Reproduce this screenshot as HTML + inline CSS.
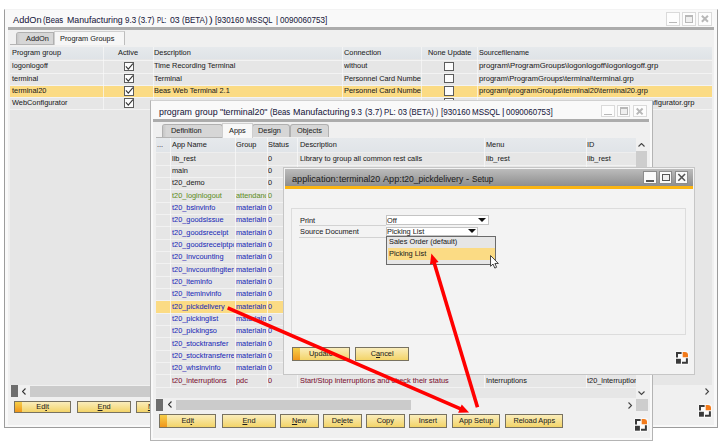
<!DOCTYPE html>
<html><head><meta charset="utf-8"><style>
html,body{margin:0;padding:0;width:722px;height:448px;overflow:hidden;background:#fff}
.a{position:absolute}
.t{position:absolute;white-space:nowrap;line-height:0;font-family:"Liberation Sans",sans-serif;transform-origin:0 0;-webkit-text-stroke:0.05px currentColor}
u{text-decoration:underline;text-underline-offset:1px}
</style></head><body>
<div class="a" style="left:4.20px;top:9.00px;width:713.90px;height:419.00px;background:#f9f9f9;border:1px solid #9c9c9c;border-top-color:#f3f3f3;box-sizing:border-box;"></div>
<div class="a" style="left:8.00px;top:29.80px;width:706.00px;height:395.00px;background:#f0f0f0;"></div>
<div class="t" style="left:13.00px;top:20.17px;font-size:9.6px;color:#202040;transform:scaleX(0.9582677625076275);">AddOn</div>
<div class="t" style="left:43.20px;top:20.17px;font-size:9.6px;color:#202040;transform:scaleX(0.8034855250935825);">(Beas</div>
<div class="t" style="left:67.00px;top:20.17px;font-size:9.6px;color:#202040;transform:scaleX(0.9163206892644159);">Manufacturing</div>
<div class="t" style="left:125.00px;top:20.17px;font-size:9.6px;color:#202040;transform:scaleX(0.830702928045294);">9.3</div>
<div class="t" style="left:138.10px;top:20.17px;font-size:9.6px;color:#202040;transform:scaleX(0.8345528280616333);">(3.7)</div>
<div class="t" style="left:157.00px;top:20.17px;font-size:9.6px;color:#202040;transform:scaleX(0.6480011820816846);">PL:</div>
<div class="t" style="left:170.10px;top:20.17px;font-size:9.6px;color:#202040;transform:scaleX(0.9094791046913483);">03</div>
<div class="t" style="left:181.60px;top:20.17px;font-size:9.6px;color:#202040;transform:scaleX(0.831712109985305);">(BETA)</div>
<div class="t" style="left:208.80px;top:20.17px;font-size:9.6px;color:#202040;transform:scaleX(1.1666666666666685);">)</div>
<div class="t" style="left:214.60px;top:20.17px;font-size:9.6px;color:#202040;transform:scaleX(0.8356777007261649);">[930160</div>
<div class="t" style="left:245.90px;top:20.17px;font-size:9.6px;color:#202040;transform:scaleX(0.7911968149441382);">MSSQL</div>
<div class="t" style="left:275.90px;top:20.17px;font-size:9.6px;color:#202040;transform:scaleX(0.8);">|</div>
<div class="t" style="left:279.60px;top:20.17px;font-size:9.6px;color:#202040;transform:scaleX(0.8436323702340981);">0090060753]</div>
<div class="a" style="left:666.00px;top:12.00px;width:13.80px;height:13.50px;background:#fdfdfd;border:1px solid #dadada;box-sizing:border-box;"></div>
<div class="a" style="left:668.90px;top:21.72px;width:8.00px;height:1.40px;background:#b8b8b8;"></div>
<div class="a" style="left:682.00px;top:12.00px;width:13.80px;height:13.50px;background:#fdfdfd;border:1px solid #dadada;box-sizing:border-box;"></div>
<div class="a" style="left:684.90px;top:14.70px;width:8.00px;height:8.10px;background:#efefef;border:1.5px solid #b8b8b8;border-top-width:2.1px;box-sizing:border-box;"></div>
<div class="a" style="left:698.00px;top:12.00px;width:13.80px;height:13.50px;background:#fdfdfd;border:1px solid #dadada;box-sizing:border-box;"></div>
<svg class="a" style="left:698.00px;top:12.00px" width="13.80" height="13.50"><path d="M3.86,3.71L9.94,9.79M9.94,3.71L3.86,9.79" stroke="#b8b8b8" stroke-width="2"/></svg>
<div class="a" style="left:8.00px;top:26.60px;width:706.00px;height:3.10px;background:#acacac;"></div>
<div class="a" style="left:16.20px;top:32.00px;width:38.30px;height:12.50px;background:#d6d6d6;border:1px solid #b0b0b0;border-bottom:none;border-top-left-radius:3px;box-sizing:border-box;"></div>
<div class="a" style="left:17.20px;top:33.00px;width:3.30px;height:11.50px;background:linear-gradient(90deg,#c6c6c6,#d4d4d4);border-top-left-radius:2px;"></div>
<div class="a" style="left:54.00px;top:31.20px;width:70.70px;height:13.80px;background:#f6f6f6;border:1px solid #cfcfcf;border-bottom:none;border-right:1.5px solid #bdbdbd;box-sizing:border-box;"></div>
<div class="a" style="left:9.80px;top:44.00px;width:44.70px;height:1.00px;background:#b4b4b4;"></div>
<div class="t" style="left:26.20px;top:38.60px;font-size:7.5px;color:#1e1e1e;transform:scaleX(0.98);">AddOn</div>
<div class="t" style="left:59.90px;top:38.60px;font-size:7.5px;color:#1e1e1e;transform:scaleX(0.98);">Program Groups</div>
<div class="a" style="left:10.40px;top:46.50px;width:701.60px;height:338.50px;background:#e6e6e6;"></div>
<div class="a" style="left:10.40px;top:46.80px;width:701.60px;height:12.70px;background:linear-gradient(#e6e9ec,#dfe3e7);"></div>
<div class="a" style="left:10.40px;top:60.40px;width:701.60px;height:1.00px;background:#f3f3f3;"></div>
<div class="a" style="left:10.40px;top:72.65px;width:701.60px;height:1.00px;background:#f3f3f3;"></div>
<div class="a" style="left:10.40px;top:84.90px;width:701.60px;height:1.00px;background:#f3f3f3;"></div>
<div class="a" style="left:10.40px;top:97.15px;width:701.60px;height:1.00px;background:#f3f3f3;"></div>
<div class="a" style="left:10.40px;top:109.40px;width:701.60px;height:1.00px;background:#f3f3f3;"></div>
<div class="a" style="left:10.40px;top:85.90px;width:701.60px;height:11.25px;background:#fbdb84;"></div>
<div class="a" style="left:103.20px;top:46.50px;width:1.00px;height:63.50px;background:rgba(248,248,248,0.7);"></div>
<div class="a" style="left:152.50px;top:46.50px;width:1.00px;height:63.50px;background:rgba(248,248,248,0.7);"></div>
<div class="a" style="left:342.00px;top:46.50px;width:1.00px;height:63.50px;background:rgba(248,248,248,0.7);"></div>
<div class="a" style="left:420.70px;top:46.50px;width:1.00px;height:63.50px;background:rgba(248,248,248,0.7);"></div>
<div class="a" style="left:476.90px;top:46.50px;width:1.00px;height:63.50px;background:rgba(248,248,248,0.7);"></div>
<div class="t" style="left:12.20px;top:53.00px;font-size:7.5px;color:#1e1e1e;transform:scaleX(0.98);">Program group</div>
<div class="t" style="left:118.00px;top:53.00px;font-size:7.5px;color:#1e1e1e;transform:scaleX(0.98);">Active</div>
<div class="t" style="left:153.90px;top:53.00px;font-size:7.5px;color:#1e1e1e;transform:scaleX(0.98);">Description</div>
<div class="t" style="left:344.00px;top:53.00px;font-size:7.5px;color:#1e1e1e;transform:scaleX(0.98);">Connection</div>
<div class="t" style="left:428.00px;top:53.00px;font-size:7.5px;color:#1e1e1e;transform:scaleX(0.98);">None Update</div>
<div class="t" style="left:478.50px;top:53.00px;font-size:7.5px;color:#1e1e1e;transform:scaleX(0.9594752869524479);">Sourcefilename</div>
<div class="t" style="left:12.20px;top:66.40px;font-size:7.5px;color:#1e1e1e;transform:scaleX(0.98);">logonlogoff</div>
<div class="t" style="left:153.90px;top:66.40px;font-size:7.5px;color:#1e1e1e;transform:scaleX(0.98);">Time Recording Terminal</div>
<div class="a" style="left:344.00px;top:57.00px;width:76.50px;height:16px;overflow:hidden"><div class="t" style="left:0;top:9.40px;font-size:7.5px;color:#1e1e1e;transform:scaleX(0.98);">without</div></div>
<div class="t" style="left:478.50px;top:66.40px;font-size:7.5px;color:#1e1e1e;transform:scaleX(1.0323750852690285);">program\ProgramGroups\logonlogoff\logonlogoff.grp</div>
<div class="a" style="left:123.50px;top:61.50px;width:10.00px;height:9.50px;background:#fcfcfc;border:1px solid #5c5c5c;box-sizing:border-box;"></div>
<svg class="a" style="left:123.5px;top:61.5px" width="10" height="10"><path d="M1.9,4.4L4.3,7.2L8.9,1.6" fill="none" stroke="#333" stroke-width="1.05"/></svg>
<div class="a" style="left:444.20px;top:61.50px;width:10.00px;height:9.50px;background:#fcfcfc;border:1px solid #5c5c5c;box-sizing:border-box;"></div>
<div class="t" style="left:12.20px;top:78.65px;font-size:7.5px;color:#1e1e1e;transform:scaleX(0.98);">terminal</div>
<div class="t" style="left:153.90px;top:78.65px;font-size:7.5px;color:#1e1e1e;transform:scaleX(0.98);">Terminal</div>
<div class="a" style="left:344.00px;top:69.25px;width:76.50px;height:16px;overflow:hidden"><div class="t" style="left:0;top:9.40px;font-size:7.5px;color:#1e1e1e;transform:scaleX(0.98);">Personnel Card Number</div></div>
<div class="t" style="left:478.50px;top:78.65px;font-size:7.5px;color:#1e1e1e;transform:scaleX(1.0051693294284787);">program\ProgramGroups\terminal\terminal.grp</div>
<div class="a" style="left:123.50px;top:73.75px;width:10.00px;height:9.50px;background:#fcfcfc;border:1px solid #5c5c5c;box-sizing:border-box;"></div>
<svg class="a" style="left:123.5px;top:73.75px" width="10" height="10"><path d="M1.9,4.4L4.3,7.2L8.9,1.6" fill="none" stroke="#333" stroke-width="1.05"/></svg>
<div class="a" style="left:444.20px;top:73.75px;width:10.00px;height:9.50px;background:#fcfcfc;border:1px solid #5c5c5c;box-sizing:border-box;"></div>
<div class="t" style="left:12.20px;top:90.90px;font-size:7.5px;color:#1e1e1e;transform:scaleX(0.98);">terminal20</div>
<div class="t" style="left:153.90px;top:90.90px;font-size:7.5px;color:#1e1e1e;transform:scaleX(0.98);">Beas Web Terminal 2.1</div>
<div class="a" style="left:344.00px;top:81.50px;width:76.50px;height:16px;overflow:hidden"><div class="t" style="left:0;top:9.40px;font-size:7.5px;color:#1e1e1e;transform:scaleX(0.98);">Personnel Card Number</div></div>
<div class="t" style="left:478.50px;top:90.90px;font-size:7.5px;color:#1e1e1e;transform:scaleX(0.994941576008749);">program\programGroups\terminal20\terminal20.grp</div>
<div class="a" style="left:123.50px;top:86.00px;width:10.00px;height:9.50px;background:#fcfcfc;border:1px solid #5c5c5c;box-sizing:border-box;"></div>
<svg class="a" style="left:123.5px;top:86.0px" width="10" height="10"><path d="M1.9,4.4L4.3,7.2L8.9,1.6" fill="none" stroke="#333" stroke-width="1.05"/></svg>
<div class="a" style="left:444.20px;top:86.00px;width:10.00px;height:9.50px;background:#fcfcfc;border:1px solid #5c5c5c;box-sizing:border-box;"></div>
<div class="t" style="left:12.20px;top:103.15px;font-size:7.5px;color:#1e1e1e;transform:scaleX(0.98);">WebConfigurator</div>
<div class="a" style="left:653px;top:93.25px;width:59px;height:16px;overflow:hidden">
<div class="t" style="left:-174.50px;top:10.10px;font-size:7.5px;color:#1e1e1e;transform:scaleX(1.0105240009621);">program\ProgramGroups\WebConfigurator\WebConfigurator.grp</div>
</div>
<div class="a" style="left:123.50px;top:98.25px;width:10.00px;height:9.50px;background:#fcfcfc;border:1px solid #5c5c5c;box-sizing:border-box;"></div>
<svg class="a" style="left:123.5px;top:98.25px" width="10" height="10"><path d="M1.9,4.4L4.3,7.2L8.9,1.6" fill="none" stroke="#333" stroke-width="1.05"/></svg>
<div class="a" style="left:444.20px;top:98.25px;width:10.00px;height:9.50px;background:#fcfcfc;border:1px solid #5c5c5c;box-sizing:border-box;"></div>
<div class="a" style="left:10.40px;top:385.00px;width:702.60px;height:12.00px;background:#f0f0f0;"></div>
<div class="a" style="left:10.90px;top:385.00px;width:6.80px;height:11.60px;background:#6e6e6e;"></div>
<svg class="a" style="left:22.00px;top:387.50px" width="5" height="8"><path d="M3,0L0,3L3,6" transform="translate(0.5,0.5)" fill="none" stroke="#333" stroke-width="1.1"/></svg>
<div class="a" style="left:30.00px;top:385.50px;width:610.00px;height:11.00px;background:#cbcbcb;"></div>
<svg class="a" style="left:705.00px;top:387.50px" width="5" height="8"><path d="M0,0L3,3L0,6" transform="translate(0.5,0.5)" fill="none" stroke="#444" stroke-width="1.1"/></svg>
<div class="a" style="left:13.60px;top:400.50px;width:57.30px;height:12.90px;background:linear-gradient(#faedbb,#f3d468);border:1px solid #787260;box-sizing:border-box;"></div>
<div class="a" style="left:14.60px;top:401.50px;width:7.00px;height:10.90px;background:linear-gradient(#f6cf4a,#f0961a);"></div>
<div class="t" style="left:13.60px;width:57.30px;text-align:center;transform-origin:50% 0;top:406.65px;font-size:7.5px;color:#1e1e1e;transform:scaleX(0.98)">Ed<u>i</u>t</div>
<div class="a" style="left:76.60px;top:400.50px;width:54.30px;height:12.90px;background:linear-gradient(#faedbb,#f3d468);border:1px solid #787260;box-sizing:border-box;"></div>
<div class="t" style="left:76.60px;width:54.30px;text-align:center;transform-origin:50% 0;top:406.65px;font-size:7.5px;color:#1e1e1e;transform:scaleX(0.98)"><u>E</u>nd</div>
<div class="a" style="left:135.70px;top:400.50px;width:38.50px;height:12.90px;background:linear-gradient(#faedbb,#f3d468);border:1px solid #787260;box-sizing:border-box;"></div>
<div class="t" style="left:135.70px;width:38.50px;text-align:center;transform-origin:50% 0;top:406.65px;font-size:7.5px;color:#1e1e1e;transform:scaleX(0.98)"><u>N</u>ew</div>
<svg class="a" style="left:698.00px;top:404.00px" width="14" height="14" viewBox="-1 -1 14 14"><rect x="-0.8" y="-0.8" width="13.6" height="13.6" rx="1.5" fill="#fbfbfb"/><path d="M0,5.6V0H5.6V2H2V5.6Z" fill="#3a3a3a"/><path d="M6.7,0H9A3,3 0 0 1 12,3V5.2H6.7Z" fill="#f27a1a"/><rect x="0" y="6.8" width="4.9" height="4.9" fill="#3a3a3a"/><path d="M11.9,6.2V11.7H6V9.7H9.9V6.2Z" fill="#3a3a3a"/></svg>
<div class="a" style="left:149.50px;top:99.60px;width:503.70px;height:341.80px;background:#f9f9f9;border:1.6px solid #b4b4b4;border-top-color:#d0d0d0;box-sizing:border-box;"></div>
<div class="a" style="left:153.00px;top:122.00px;width:496.70px;height:316.30px;background:#f0f0f0;"></div>
<div class="t" style="left:158.60px;top:112.24px;font-size:9.4px;color:#202040;transform:scaleX(0.9430304379277725);">program</div>
<div class="t" style="left:194.50px;top:112.24px;font-size:9.4px;color:#202040;transform:scaleX(0.9426128497861787);">group</div>
<div class="t" style="left:220.00px;top:112.24px;font-size:9.4px;color:#202040;transform:scaleX(0.9421288529738903);">"terminal20"</div>
<div class="t" style="left:269.50px;top:112.24px;font-size:9.4px;color:#202040;transform:scaleX(0.826517705539286);">(Beas</div>
<div class="t" style="left:292.80px;top:112.24px;font-size:9.4px;color:#202040;transform:scaleX(0.9510996087003591);">Manufacturing</div>
<div class="t" style="left:351.40px;top:112.24px;font-size:9.4px;color:#202040;transform:scaleX(0.8425254737644025);">9.3</div>
<div class="t" style="left:364.50px;top:112.24px;font-size:9.4px;color:#202040;transform:scaleX(0.8927415423147149);">(3.7)</div>
<div class="t" style="left:383.60px;top:112.24px;font-size:9.4px;color:#202040;transform:scaleX(0.8316638189292221);">PL:</div>
<div class="t" style="left:397.60px;top:112.24px;font-size:9.4px;color:#202040;transform:scaleX(0.8713591681854862);">03</div>
<div class="t" style="left:408.80px;top:112.24px;font-size:9.4px;color:#202040;transform:scaleX(0.8291316092203227);">(BETA)</div>
<div class="t" style="left:436.20px;top:112.24px;font-size:9.4px;color:#202040;transform:scaleX(0.6666666666666591);">)</div>
<div class="t" style="left:441.00px;top:112.24px;font-size:9.4px;color:#202040;transform:scaleX(0.8671297034727751);">[930160</div>
<div class="t" style="left:472.00px;top:112.24px;font-size:9.4px;color:#202040;transform:scaleX(0.8525586575447591);">MSSQL</div>
<div class="t" style="left:502.00px;top:112.24px;font-size:9.4px;color:#202040;transform:scaleX(0.9999999999999887);">|</div>
<div class="t" style="left:506.30px;top:112.24px;font-size:9.4px;color:#202040;transform:scaleX(0.8533544978794121);">0090060753]</div>
<div class="a" style="left:601.40px;top:104.60px;width:13.30px;height:12.90px;background:#fdfdfd;border:1px solid #dadada;box-sizing:border-box;"></div>
<div class="a" style="left:604.19px;top:113.89px;width:7.71px;height:1.40px;background:#b8b8b8;"></div>
<div class="a" style="left:617.20px;top:104.60px;width:13.30px;height:12.90px;background:#fdfdfd;border:1px solid #dadada;box-sizing:border-box;"></div>
<div class="a" style="left:619.99px;top:107.18px;width:7.71px;height:7.74px;background:#efefef;border:1.5px solid #b8b8b8;border-top-width:2.1px;box-sizing:border-box;"></div>
<div class="a" style="left:633.40px;top:104.60px;width:13.30px;height:12.90px;background:#fdfdfd;border:1px solid #dadada;box-sizing:border-box;"></div>
<svg class="a" style="left:633.40px;top:104.60px" width="13.30" height="12.90"><path d="M3.72,3.52L9.58,9.38M9.58,3.52L3.72,9.38" stroke="#b8b8b8" stroke-width="2"/></svg>
<div class="a" style="left:153.40px;top:119.40px;width:495.60px;height:2.60px;background:#acacac;"></div>
<div class="a" style="left:156.00px;top:136.80px;width:66.40px;height:1.00px;background:#b4b4b4;"></div>
<div class="a" style="left:161.80px;top:124.20px;width:61.00px;height:13.30px;background:#d6d6d6;border:1px solid #b0b0b0;border-bottom:none;border-radius:3px 3px 0 0;box-sizing:border-box;"></div>
<div class="t" style="left:171.20px;top:130.80px;font-size:7.5px;color:#1e1e1e;transform:scaleX(0.98);">Definition</div>
<div class="a" style="left:162.80px;top:125.20px;width:3.20px;height:12.30px;background:linear-gradient(90deg,#c6c6c6,#d4d4d4);border-top-left-radius:2px;"></div>
<div class="a" style="left:252.20px;top:124.20px;width:37.70px;height:13.30px;background:#d6d6d6;border:1px solid #b0b0b0;border-bottom:none;border-radius:3px 3px 0 0;box-sizing:border-box;"></div>
<div class="t" style="left:258.00px;top:130.80px;font-size:7.5px;color:#1e1e1e;transform:scaleX(0.98);">Design</div>
<div class="a" style="left:289.50px;top:124.20px;width:39.50px;height:13.30px;background:#d6d6d6;border:1px solid #b0b0b0;border-bottom:none;border-radius:3px 3px 0 0;box-sizing:border-box;"></div>
<div class="t" style="left:297.00px;top:130.80px;font-size:7.5px;color:#1e1e1e;transform:scaleX(0.98);">Objects</div>
<div class="a" style="left:222.40px;top:122.90px;width:30.20px;height:15.10px;background:#f8f8f8;border:1px solid #cfcfcf;border-bottom:none;box-sizing:border-box;"></div>
<div class="t" style="left:229.30px;top:130.80px;font-size:7.5px;color:#1e1e1e;transform:scaleX(0.98);">Apps</div>
<div class="a" style="left:156.00px;top:138.00px;width:479.50px;height:260.20px;background:#e6e6e6;"></div>
<div class="a" style="left:156.00px;top:138.00px;width:479.50px;height:13.50px;background:linear-gradient(#e6e9ec,#e0e4e8);"></div>
<div class="a" style="left:156.00px;top:151.50px;width:479.50px;height:1.80px;background:#eeeeee;"></div>
<div class="t" style="left:157.30px;top:145.10px;font-size:7.5px;color:#1e1e1e;transform:scaleX(0.98);">...</div>
<div class="t" style="left:172.40px;top:145.10px;font-size:7.5px;color:#1e1e1e;transform:scaleX(0.98);">App Name</div>
<div class="t" style="left:235.80px;top:145.10px;font-size:7.5px;color:#1e1e1e;transform:scaleX(0.98);">Group</div>
<div class="t" style="left:267.60px;top:145.10px;font-size:7.5px;color:#1e1e1e;transform:scaleX(0.98);">Status</div>
<div class="t" style="left:299.60px;top:145.10px;font-size:7.5px;color:#1e1e1e;transform:scaleX(0.98);">Description</div>
<div class="t" style="left:485.50px;top:145.10px;font-size:7.5px;color:#1e1e1e;transform:scaleX(0.98);">Menu</div>
<div class="t" style="left:587.00px;top:145.10px;font-size:7.5px;color:#1e1e1e;transform:scaleX(0.98);">ID</div>
<div class="a" style="left:156.00px;top:164.63px;width:479.50px;height:1.00px;background:#f2f2f2;"></div>
<div class="a" style="left:171.70px;top:149.40px;width:62.10px;height:16px;overflow:hidden"><div class="t" style="left:0;top:9.40px;font-size:7.5px;color:#1e1e1e;transform:scaleX(0.98);">lib_rest</div></div>
<div class="t" style="left:267.90px;top:158.80px;font-size:7.5px;color:#1e1e1e;transform:scaleX(0.98);">0</div>
<div class="t" style="left:299.60px;top:158.80px;font-size:7.5px;color:#1e1e1e;transform:scaleX(0.98);">Library to group all common rest calls</div>
<div class="t" style="left:485.50px;top:158.80px;font-size:7.5px;color:#1e1e1e;transform:scaleX(0.98);">lib_rest</div>
<div class="t" style="left:587.00px;top:158.80px;font-size:7.5px;color:#1e1e1e;transform:scaleX(0.98);">lib_rest</div>
<div class="a" style="left:156.00px;top:176.96px;width:479.50px;height:1.00px;background:#f2f2f2;"></div>
<div class="a" style="left:171.70px;top:161.73px;width:62.10px;height:16px;overflow:hidden"><div class="t" style="left:0;top:9.40px;font-size:7.5px;color:#1e1e1e;transform:scaleX(0.98);">main</div></div>
<div class="t" style="left:267.90px;top:171.13px;font-size:7.5px;color:#1e1e1e;transform:scaleX(0.98);">0</div>
<div class="a" style="left:156.00px;top:189.29px;width:479.50px;height:1.00px;background:#f2f2f2;"></div>
<div class="a" style="left:171.70px;top:174.06px;width:62.10px;height:16px;overflow:hidden"><div class="t" style="left:0;top:9.40px;font-size:7.5px;color:#1e1e1e;transform:scaleX(0.98);">t20_demo</div></div>
<div class="t" style="left:267.90px;top:183.46px;font-size:7.5px;color:#1e1e1e;transform:scaleX(0.98);">0</div>
<div class="a" style="left:156.00px;top:201.62px;width:479.50px;height:1.00px;background:#f2f2f2;"></div>
<div class="a" style="left:171.70px;top:186.39px;width:62.10px;height:16px;overflow:hidden"><div class="t" style="left:0;top:9.40px;font-size:7.5px;color:#5f8f1f;transform:scaleX(0.98);">t20_loginlogout</div></div>
<div class="a" style="left:235.80px;top:186.39px;width:30.10px;height:16px;overflow:hidden"><div class="t" style="left:0;top:9.40px;font-size:7.5px;color:#5f8f1f;transform:scaleX(0.98);">attendance</div></div>
<div class="t" style="left:267.90px;top:195.79px;font-size:7.5px;color:#5f8f1f;transform:scaleX(0.98);">0</div>
<div class="a" style="left:156.00px;top:213.95px;width:479.50px;height:1.00px;background:#f2f2f2;"></div>
<div class="a" style="left:171.70px;top:198.72px;width:62.10px;height:16px;overflow:hidden"><div class="t" style="left:0;top:9.40px;font-size:7.5px;color:#1c2cb8;transform:scaleX(0.98);">t20_bsinvinfo</div></div>
<div class="a" style="left:235.80px;top:198.72px;width:30.10px;height:16px;overflow:hidden"><div class="t" style="left:0;top:9.40px;font-size:7.5px;color:#1c2cb8;transform:scaleX(0.98);">materialmanagement</div></div>
<div class="t" style="left:267.90px;top:208.12px;font-size:7.5px;color:#1c2cb8;transform:scaleX(0.98);">0</div>
<div class="a" style="left:156.00px;top:226.28px;width:479.50px;height:1.00px;background:#f2f2f2;"></div>
<div class="a" style="left:171.70px;top:211.05px;width:62.10px;height:16px;overflow:hidden"><div class="t" style="left:0;top:9.40px;font-size:7.5px;color:#1c2cb8;transform:scaleX(0.98);">t20_goodsissue</div></div>
<div class="a" style="left:235.80px;top:211.05px;width:30.10px;height:16px;overflow:hidden"><div class="t" style="left:0;top:9.40px;font-size:7.5px;color:#1c2cb8;transform:scaleX(0.98);">materialmanagement</div></div>
<div class="t" style="left:267.90px;top:220.45px;font-size:7.5px;color:#1c2cb8;transform:scaleX(0.98);">0</div>
<div class="a" style="left:156.00px;top:238.61px;width:479.50px;height:1.00px;background:#f2f2f2;"></div>
<div class="a" style="left:171.70px;top:223.38px;width:62.10px;height:16px;overflow:hidden"><div class="t" style="left:0;top:9.40px;font-size:7.5px;color:#1c2cb8;transform:scaleX(0.98);">t20_goodsreceipt</div></div>
<div class="a" style="left:235.80px;top:223.38px;width:30.10px;height:16px;overflow:hidden"><div class="t" style="left:0;top:9.40px;font-size:7.5px;color:#1c2cb8;transform:scaleX(0.98);">materialmanagement</div></div>
<div class="t" style="left:267.90px;top:232.78px;font-size:7.5px;color:#1c2cb8;transform:scaleX(0.98);">0</div>
<div class="a" style="left:156.00px;top:250.94px;width:479.50px;height:1.00px;background:#f2f2f2;"></div>
<div class="a" style="left:171.70px;top:235.71px;width:62.10px;height:16px;overflow:hidden"><div class="t" style="left:0;top:9.40px;font-size:7.5px;color:#1c2cb8;transform:scaleX(0.98);">t20_goodsreceiptpo</div></div>
<div class="a" style="left:235.80px;top:235.71px;width:30.10px;height:16px;overflow:hidden"><div class="t" style="left:0;top:9.40px;font-size:7.5px;color:#1c2cb8;transform:scaleX(0.98);">materialmanagement</div></div>
<div class="t" style="left:267.90px;top:245.11px;font-size:7.5px;color:#1c2cb8;transform:scaleX(0.98);">0</div>
<div class="a" style="left:156.00px;top:263.27px;width:479.50px;height:1.00px;background:#f2f2f2;"></div>
<div class="a" style="left:171.70px;top:248.04px;width:62.10px;height:16px;overflow:hidden"><div class="t" style="left:0;top:9.40px;font-size:7.5px;color:#1c2cb8;transform:scaleX(0.98);">t20_invcounting</div></div>
<div class="a" style="left:235.80px;top:248.04px;width:30.10px;height:16px;overflow:hidden"><div class="t" style="left:0;top:9.40px;font-size:7.5px;color:#1c2cb8;transform:scaleX(0.98);">materialmanagement</div></div>
<div class="t" style="left:267.90px;top:257.44px;font-size:7.5px;color:#1c2cb8;transform:scaleX(0.98);">0</div>
<div class="a" style="left:156.00px;top:275.60px;width:479.50px;height:1.00px;background:#f2f2f2;"></div>
<div class="a" style="left:171.70px;top:260.37px;width:62.10px;height:16px;overflow:hidden"><div class="t" style="left:0;top:9.40px;font-size:7.5px;color:#1c2cb8;transform:scaleX(0.98);">t20_invcountingitem</div></div>
<div class="a" style="left:235.80px;top:260.37px;width:30.10px;height:16px;overflow:hidden"><div class="t" style="left:0;top:9.40px;font-size:7.5px;color:#1c2cb8;transform:scaleX(0.98);">materialmanagement</div></div>
<div class="t" style="left:267.90px;top:269.77px;font-size:7.5px;color:#1c2cb8;transform:scaleX(0.98);">0</div>
<div class="a" style="left:156.00px;top:287.93px;width:479.50px;height:1.00px;background:#f2f2f2;"></div>
<div class="a" style="left:171.70px;top:272.70px;width:62.10px;height:16px;overflow:hidden"><div class="t" style="left:0;top:9.40px;font-size:7.5px;color:#1c2cb8;transform:scaleX(0.98);">t20_iteminfo</div></div>
<div class="a" style="left:235.80px;top:272.70px;width:30.10px;height:16px;overflow:hidden"><div class="t" style="left:0;top:9.40px;font-size:7.5px;color:#1c2cb8;transform:scaleX(0.98);">materialmanagement</div></div>
<div class="t" style="left:267.90px;top:282.10px;font-size:7.5px;color:#1c2cb8;transform:scaleX(0.98);">0</div>
<div class="a" style="left:156.00px;top:300.26px;width:479.50px;height:1.00px;background:#f2f2f2;"></div>
<div class="a" style="left:171.70px;top:285.03px;width:62.10px;height:16px;overflow:hidden"><div class="t" style="left:0;top:9.40px;font-size:7.5px;color:#1c2cb8;transform:scaleX(0.98);">t20_iteminvinfo</div></div>
<div class="a" style="left:235.80px;top:285.03px;width:30.10px;height:16px;overflow:hidden"><div class="t" style="left:0;top:9.40px;font-size:7.5px;color:#1c2cb8;transform:scaleX(0.98);">materialmanagement</div></div>
<div class="t" style="left:267.90px;top:294.43px;font-size:7.5px;color:#1c2cb8;transform:scaleX(0.98);">0</div>
<div class="a" style="left:156.00px;top:312.59px;width:479.50px;height:1.00px;background:#f2f2f2;"></div>
<div class="a" style="left:156.00px;top:301.26px;width:479.50px;height:11.33px;background:#fbdb84;"></div>
<div class="a" style="left:171.70px;top:297.36px;width:62.10px;height:16px;overflow:hidden"><div class="t" style="left:0;top:9.40px;font-size:7.5px;color:#1c2cb8;transform:scaleX(0.98);">t20_pickdelivery</div></div>
<div class="a" style="left:235.80px;top:297.36px;width:30.10px;height:16px;overflow:hidden"><div class="t" style="left:0;top:9.40px;font-size:7.5px;color:#1c2cb8;transform:scaleX(0.98);">materialmanagement</div></div>
<div class="t" style="left:267.90px;top:306.76px;font-size:7.5px;color:#1c2cb8;transform:scaleX(0.98);">0</div>
<div class="a" style="left:156.00px;top:324.92px;width:479.50px;height:1.00px;background:#f2f2f2;"></div>
<div class="a" style="left:171.70px;top:309.69px;width:62.10px;height:16px;overflow:hidden"><div class="t" style="left:0;top:9.40px;font-size:7.5px;color:#1c2cb8;transform:scaleX(0.98);">t20_pickinglist</div></div>
<div class="a" style="left:235.80px;top:309.69px;width:30.10px;height:16px;overflow:hidden"><div class="t" style="left:0;top:9.40px;font-size:7.5px;color:#1c2cb8;transform:scaleX(0.98);">materialmanagement</div></div>
<div class="t" style="left:267.90px;top:319.09px;font-size:7.5px;color:#1c2cb8;transform:scaleX(0.98);">0</div>
<div class="a" style="left:156.00px;top:337.25px;width:479.50px;height:1.00px;background:#f2f2f2;"></div>
<div class="a" style="left:171.70px;top:322.02px;width:62.10px;height:16px;overflow:hidden"><div class="t" style="left:0;top:9.40px;font-size:7.5px;color:#1c2cb8;transform:scaleX(0.98);">t20_pickingso</div></div>
<div class="a" style="left:235.80px;top:322.02px;width:30.10px;height:16px;overflow:hidden"><div class="t" style="left:0;top:9.40px;font-size:7.5px;color:#1c2cb8;transform:scaleX(0.98);">materialmanagement</div></div>
<div class="t" style="left:267.90px;top:331.42px;font-size:7.5px;color:#1c2cb8;transform:scaleX(0.98);">0</div>
<div class="a" style="left:156.00px;top:349.58px;width:479.50px;height:1.00px;background:#f2f2f2;"></div>
<div class="a" style="left:171.70px;top:334.35px;width:62.10px;height:16px;overflow:hidden"><div class="t" style="left:0;top:9.40px;font-size:7.5px;color:#1c2cb8;transform:scaleX(0.98);">t20_stocktransfer</div></div>
<div class="a" style="left:235.80px;top:334.35px;width:30.10px;height:16px;overflow:hidden"><div class="t" style="left:0;top:9.40px;font-size:7.5px;color:#1c2cb8;transform:scaleX(0.98);">materialmanagement</div></div>
<div class="t" style="left:267.90px;top:343.75px;font-size:7.5px;color:#1c2cb8;transform:scaleX(0.98);">0</div>
<div class="a" style="left:156.00px;top:361.91px;width:479.50px;height:1.00px;background:#f2f2f2;"></div>
<div class="a" style="left:171.70px;top:346.68px;width:62.10px;height:16px;overflow:hidden"><div class="t" style="left:0;top:9.40px;font-size:7.5px;color:#1c2cb8;transform:scaleX(0.98);">t20_stocktransferrequest</div></div>
<div class="a" style="left:235.80px;top:346.68px;width:30.10px;height:16px;overflow:hidden"><div class="t" style="left:0;top:9.40px;font-size:7.5px;color:#1c2cb8;transform:scaleX(0.98);">materialmanagement</div></div>
<div class="t" style="left:267.90px;top:356.08px;font-size:7.5px;color:#1c2cb8;transform:scaleX(0.98);">0</div>
<div class="a" style="left:156.00px;top:374.24px;width:479.50px;height:1.00px;background:#f2f2f2;"></div>
<div class="a" style="left:171.70px;top:359.01px;width:62.10px;height:16px;overflow:hidden"><div class="t" style="left:0;top:9.40px;font-size:7.5px;color:#1c2cb8;transform:scaleX(0.98);">t20_whsinvinfo</div></div>
<div class="a" style="left:235.80px;top:359.01px;width:30.10px;height:16px;overflow:hidden"><div class="t" style="left:0;top:9.40px;font-size:7.5px;color:#1c2cb8;transform:scaleX(0.98);">materialmanagement</div></div>
<div class="t" style="left:267.90px;top:368.41px;font-size:7.5px;color:#1c2cb8;transform:scaleX(0.98);">0</div>
<div class="a" style="left:156.00px;top:386.57px;width:479.50px;height:1.00px;background:#f2f2f2;"></div>
<div class="a" style="left:171.70px;top:371.34px;width:62.10px;height:16px;overflow:hidden"><div class="t" style="left:0;top:9.40px;font-size:7.5px;color:#7c1232;transform:scaleX(0.98);">t20_interruptions</div></div>
<div class="a" style="left:235.80px;top:371.34px;width:30.10px;height:16px;overflow:hidden"><div class="t" style="left:0;top:9.40px;font-size:7.5px;color:#7c1232;transform:scaleX(0.98);">pdc</div></div>
<div class="t" style="left:267.90px;top:380.74px;font-size:7.5px;color:#7c1232;transform:scaleX(0.98);">0</div>
<div class="t" style="left:299.60px;top:380.74px;font-size:7.5px;color:#7c1232;transform:scaleX(0.98);">Start/Stop interruptions and check their status</div>
<div class="t" style="left:485.50px;top:380.74px;font-size:7.5px;color:#1e1e1e;transform:scaleX(0.98);">Interruptions</div>
<div class="a" style="left:587.00px;top:371.34px;width:49.00px;height:16px;overflow:hidden"><div class="t" style="left:0;top:9.40px;font-size:7.5px;color:#1e1e1e;transform:scaleX(0.98);">t20_interruptions</div></div>
<div class="a" style="left:170.40px;top:138.00px;width:1.00px;height:249.50px;background:rgba(248,248,248,0.75);"></div>
<div class="a" style="left:234.50px;top:138.00px;width:1.00px;height:249.50px;background:rgba(248,248,248,0.75);"></div>
<div class="a" style="left:266.50px;top:138.00px;width:1.00px;height:249.50px;background:rgba(248,248,248,0.75);"></div>
<div class="a" style="left:297.40px;top:138.00px;width:1.00px;height:249.50px;background:rgba(248,248,248,0.75);"></div>
<div class="a" style="left:483.70px;top:138.00px;width:1.00px;height:249.50px;background:rgba(248,248,248,0.75);"></div>
<div class="a" style="left:585.50px;top:138.00px;width:1.00px;height:249.50px;background:rgba(248,248,248,0.75);"></div>
<div class="a" style="left:635.50px;top:138.00px;width:12.50px;height:260.20px;background:#f0f0f0;"></div>
<svg class="a" style="left:638.30px;top:142.50px" width="8" height="5"><path d="M0,3L3,0L6,3" transform="translate(0.5,0.5)" fill="none" stroke="#444" stroke-width="1.1"/></svg>
<div class="a" style="left:636.30px;top:150.80px;width:10.70px;height:89.20px;background:#cdcdcd;"></div>
<svg class="a" style="left:638.30px;top:390.60px" width="8" height="5"><path d="M0,0L3,3L6,0" transform="translate(0.5,0.5)" fill="none" stroke="#444" stroke-width="1.1"/></svg>
<div class="a" style="left:156.00px;top:398.20px;width:479.50px;height:12.80px;background:#f0f0f0;"></div>
<div class="a" style="left:155.80px;top:398.50px;width:7.20px;height:12.00px;background:#6e6e6e;"></div>
<svg class="a" style="left:167.50px;top:401.00px" width="5" height="8"><path d="M3,0L0,3L3,6" transform="translate(0.5,0.5)" fill="none" stroke="#333" stroke-width="1.1"/></svg>
<div class="a" style="left:175.50px;top:399.50px;width:235.50px;height:10.70px;background:#cbcbcb;"></div>
<svg class="a" style="left:628.00px;top:401.70px" width="5" height="8"><path d="M0,0L3,3L0,6" transform="translate(0.5,0.5)" fill="none" stroke="#444" stroke-width="1.1"/></svg>
<div class="a" style="left:635.50px;top:399.00px;width:12.50px;height:12.00px;background:#cdcdcd;"></div>
<div class="a" style="left:158.90px;top:414.20px;width:57.60px;height:13.40px;background:linear-gradient(#faedbb,#f3d468);border:1px solid #787260;box-sizing:border-box;"></div>
<div class="a" style="left:159.90px;top:415.20px;width:7.00px;height:11.40px;background:linear-gradient(#f6cf4a,#f0961a);"></div>
<div class="t" style="left:158.90px;width:57.60px;text-align:center;transform-origin:50% 0;top:420.60px;font-size:7.5px;color:#1e1e1e;transform:scaleX(0.98)">Ed<u>i</u>t</div>
<div class="a" style="left:222.00px;top:414.20px;width:54.00px;height:13.40px;background:linear-gradient(#faedbb,#f3d468);border:1px solid #787260;box-sizing:border-box;"></div>
<div class="t" style="left:222.00px;width:54.00px;text-align:center;transform-origin:50% 0;top:420.60px;font-size:7.5px;color:#1e1e1e;transform:scaleX(0.98)"><u>E</u>nd</div>
<div class="a" style="left:280.20px;top:414.20px;width:38.50px;height:13.40px;background:linear-gradient(#faedbb,#f3d468);border:1px solid #787260;box-sizing:border-box;"></div>
<div class="t" style="left:280.20px;width:38.50px;text-align:center;transform-origin:50% 0;top:420.60px;font-size:7.5px;color:#1e1e1e;transform:scaleX(0.98)"><u>N</u>ew</div>
<div class="a" style="left:323.00px;top:414.20px;width:38.90px;height:13.40px;background:linear-gradient(#faedbb,#f3d468);border:1px solid #787260;box-sizing:border-box;"></div>
<div class="t" style="left:323.00px;width:38.90px;text-align:center;transform-origin:50% 0;top:420.60px;font-size:7.5px;color:#1e1e1e;transform:scaleX(0.98)">De<u>l</u>ete</div>
<div class="a" style="left:366.10px;top:414.20px;width:38.60px;height:13.40px;background:linear-gradient(#faedbb,#f3d468);border:1px solid #787260;box-sizing:border-box;"></div>
<div class="t" style="left:366.10px;width:38.60px;text-align:center;transform-origin:50% 0;top:420.60px;font-size:7.5px;color:#1e1e1e;transform:scaleX(0.98)">Copy</div>
<div class="a" style="left:409.20px;top:414.20px;width:37.80px;height:13.40px;background:linear-gradient(#faedbb,#f3d468);border:1px solid #787260;box-sizing:border-box;"></div>
<div class="t" style="left:409.20px;width:37.80px;text-align:center;transform-origin:50% 0;top:420.60px;font-size:7.5px;color:#1e1e1e;transform:scaleX(0.98)">Insert</div>
<div class="a" style="left:452.10px;top:414.20px;width:48.30px;height:13.40px;background:linear-gradient(#faedbb,#f3d468);border:1px solid #787260;box-sizing:border-box;"></div>
<div class="t" style="left:452.10px;width:48.30px;text-align:center;transform-origin:50% 0;top:420.60px;font-size:7.5px;color:#1e1e1e;transform:scaleX(0.98)">App Setup</div>
<div class="a" style="left:504.90px;top:414.20px;width:58.60px;height:13.40px;background:linear-gradient(#faedbb,#f3d468);border:1px solid #787260;box-sizing:border-box;"></div>
<div class="t" style="left:504.90px;width:58.60px;text-align:center;transform-origin:50% 0;top:420.60px;font-size:7.5px;color:#1e1e1e;transform:scaleX(0.98)">Reload Apps</div>
<svg class="a" style="left:633.60px;top:417.60px" width="14" height="14" viewBox="-1 -1 14 14"><rect x="-0.8" y="-0.8" width="13.6" height="13.6" rx="1.5" fill="#fbfbfb"/><path d="M0,5.6V0H5.6V2H2V5.6Z" fill="#3a3a3a"/><path d="M6.7,0H9A3,3 0 0 1 12,3V5.2H6.7Z" fill="#f27a1a"/><rect x="0" y="6.8" width="4.9" height="4.9" fill="#3a3a3a"/><path d="M11.9,6.2V11.7H6V9.7H9.9V6.2Z" fill="#3a3a3a"/></svg>
<div class="a" style="left:283.00px;top:167.30px;width:411.60px;height:207.30px;background:#f3f3f3;border:1.6px solid #c6c6c6;box-sizing:border-box;"></div>
<div class="a" style="left:284.60px;top:168.90px;width:408.40px;height:16.80px;background:linear-gradient(#bcbcbc,#8e8e8e);"></div>
<div class="a" style="left:284.60px;top:185.70px;width:408.40px;height:3.10px;background:#fbb512;"></div>
<div class="t" style="left:292.40px;top:178.88px;font-size:9px;color:#1e1e1e;transform:scaleX(1.0148507980569055);">application:</div>
<div class="t" style="left:339.10px;top:178.88px;font-size:9px;color:#1e1e1e;transform:scaleX(0.9782188803793276);">terminal20</div>
<div class="t" style="left:382.90px;top:178.88px;font-size:9px;color:#1e1e1e;transform:scaleX(1.0158950449962045);">App:</div>
<div class="t" style="left:401.90px;top:178.88px;font-size:9px;color:#1e1e1e;transform:scaleX(0.9487390099783019);">t20_pickdelivery</div>
<div class="t" style="left:465.90px;top:178.88px;font-size:9px;color:#1e1e1e;transform:scaleX(1.0333333333333334);">-</div>
<div class="t" style="left:471.70px;top:178.88px;font-size:9px;color:#1e1e1e;transform:scaleX(0.9100899142388443);">Setup</div>
<div class="a" style="left:643.40px;top:171.20px;width:13.40px;height:12.80px;background:#fafafa;border:1px solid #8c8c8c;box-sizing:border-box;"></div>
<div class="a" style="left:646.21px;top:180.16px;width:7.77px;height:1.40px;background:#555555;"></div>
<div class="a" style="left:659.00px;top:171.20px;width:13.40px;height:12.80px;background:#fafafa;border:1px solid #8c8c8c;box-sizing:border-box;"></div>
<div class="a" style="left:661.81px;top:173.76px;width:7.77px;height:7.68px;background:#efefef;border:1.2px solid #555555;border-top-width:1.7999999999999998px;box-sizing:border-box;"></div>
<div class="a" style="left:674.70px;top:171.20px;width:13.40px;height:12.80px;background:#fafafa;border:1px solid #8c8c8c;box-sizing:border-box;"></div>
<svg class="a" style="left:674.70px;top:171.20px" width="13.40" height="12.80"><path d="M3.35,3.05L10.05,9.75M10.05,3.05L3.35,9.75" stroke="#555555" stroke-width="1.6"/></svg>
<div class="a" style="left:291.00px;top:207.50px;width:395.00px;height:127.70px;border:1px solid #dcdcdc;box-sizing:border-box;"></div>
<div class="t" style="left:299.50px;top:220.60px;font-size:7.5px;color:#1e1e1e;transform:scaleX(0.98);">Print</div>
<div class="a" style="left:299.00px;top:225.00px;width:87.30px;height:1.00px;background:#d2d2d2;"></div>
<div class="t" style="left:299.50px;top:232.30px;font-size:7.5px;color:#1e1e1e;transform:scaleX(0.98);">Source Document</div>
<div class="a" style="left:299.00px;top:236.70px;width:87.30px;height:1.00px;background:#d2d2d2;"></div>
<div class="a" style="left:386.30px;top:215.30px;width:102.60px;height:9.30px;background:#ffffff;border:1px solid #c4c4c4;box-sizing:border-box;"></div>
<div class="t" style="left:386.90px;top:220.90px;font-size:7.5px;color:#1e1e1e;transform:scaleX(0.98);">Off</div>
<svg class="a" style="left:478.40px;top:217.95px" width="8" height="4"><path d="M0,0H8L4,4Z" fill="#111"/></svg>
<div class="a" style="left:386.30px;top:226.60px;width:92.10px;height:9.10px;background:#ffffff;border:1px solid #c4c4c4;box-sizing:border-box;"></div>
<div class="t" style="left:386.90px;top:232.00px;font-size:7.5px;color:#1e1e1e;transform:scaleX(0.98);">Picking List</div>
<svg class="a" style="left:467.90px;top:229.15px" width="8" height="4"><path d="M0,0H8L4,4Z" fill="#111"/></svg>
<div class="a" style="left:386.20px;top:236.00px;width:109.80px;height:28.60px;background:#e6e6e6;border:1px solid #6a6a6a;border-bottom-width:1.6px;box-sizing:border-box;"></div>
<div class="a" style="left:387.60px;top:248.00px;width:107.40px;height:12.00px;background:#fbdb84;"></div>
<div class="t" style="left:388.60px;top:241.90px;font-size:7.5px;color:#1e1e1e;transform:scaleX(0.98);">Sales Order (default)</div>
<div class="t" style="left:388.60px;top:253.60px;font-size:7.5px;color:#1e1e1e;transform:scaleX(0.98);">Picking List</div>
<div class="a" style="left:292.00px;top:347.10px;width:57.80px;height:13.60px;background:linear-gradient(#faedbb,#f3d468);border:1px solid #787260;box-sizing:border-box;"></div>
<div class="a" style="left:293.00px;top:348.10px;width:7.00px;height:11.60px;background:linear-gradient(#f6cf4a,#f0961a);"></div>
<div class="t" style="left:292.00px;width:57.80px;text-align:center;transform-origin:50% 0;top:353.60px;font-size:7.5px;color:#1e1e1e;transform:scaleX(0.98)">Update</div>
<div class="a" style="left:355.20px;top:347.10px;width:54.30px;height:13.60px;background:linear-gradient(#faedbb,#f3d468);border:1px solid #787260;box-sizing:border-box;"></div>
<div class="t" style="left:355.20px;width:54.30px;text-align:center;transform-origin:50% 0;top:353.60px;font-size:7.5px;color:#1e1e1e;transform:scaleX(0.98)">C<u>a</u>ncel</div>
<svg class="a" style="left:675.00px;top:350.80px" width="14" height="14" viewBox="-1 -1 14 14"><rect x="-0.8" y="-0.8" width="13.6" height="13.6" rx="1.5" fill="#fbfbfb"/><path d="M0,5.6V0H5.6V2H2V5.6Z" fill="#3a3a3a"/><path d="M6.7,0H9A3,3 0 0 1 12,3V5.2H6.7Z" fill="#f27a1a"/><rect x="0" y="6.8" width="4.9" height="4.9" fill="#3a3a3a"/><path d="M11.9,6.2V11.7H6V9.7H9.9V6.2Z" fill="#3a3a3a"/></svg>
<svg class="a" style="left:0;top:0" width="722" height="448"><line x1="227.7" y1="307.9" x2="461.76" y2="409.42" stroke="#ff0000" stroke-width="3.6"/><path d="M469.1,412.6L458.14,412.75L461.72,404.49Z" fill="#ff0000"/></svg>
<svg class="a" style="left:0;top:0" width="722" height="448"><line x1="477.5" y1="407.3" x2="433.70" y2="261.26" stroke="#ff0000" stroke-width="3.6"/><path d="M431.4,253.6L438.58,261.89L429.96,264.47Z" fill="#ff0000"/></svg>
<svg class="a" style="left:489.8px;top:254.7px" width="10" height="14" viewBox="0 0 11 15.4"><path d="M0.6,0.6L0.6,12.4L3.3,10L5.3,14.4L7.3,13.5L5.4,9.3L9.2,9.3Z" fill="#fff" stroke="#333" stroke-width="1"/></svg>
</body></html>
